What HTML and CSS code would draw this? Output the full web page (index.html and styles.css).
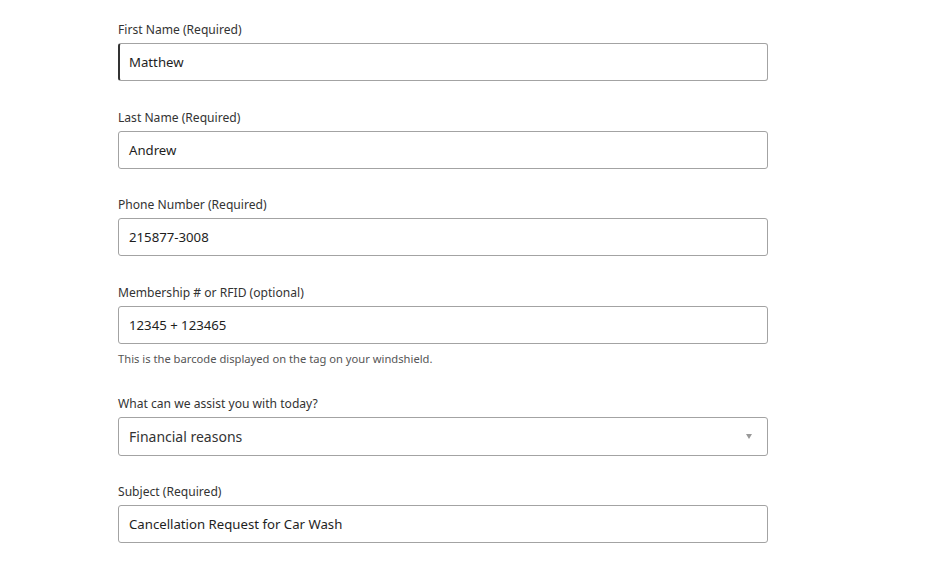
FILE: index.html
```html
<!DOCTYPE html>
<html>
<head>
<meta charset="utf-8">
<link rel="stylesheet" href="styles.css">
</head>
<body>
<form class="form">
  <div class="field">
    <label class="label">First Name (Required)</label>
    <div class="input focused">Matthew</div>
  </div>
  <div class="field">
    <label class="label">Last Name (Required)</label>
    <div class="input">Andrew</div>
  </div>
  <div class="field">
    <label class="label">Phone Number (Required)</label>
    <div class="input">215877-3008</div>
  </div>
  <div class="field">
    <label class="label">Membership # or RFID (optional)</label>
    <div class="input">12345 + 123465</div>
    <div class="help">This is the barcode displayed on the tag on your windshield.</div>
  </div>
  <div class="field field-select">
    <label class="label">What can we assist you with today?</label>
    <div class="input select"><span>Financial reasons</span><span class="arrow"></span></div>
  </div>
  <div class="field">
    <label class="label">Subject (Required)</label>
    <div class="input">Cancellation Request for Car Wash</div>
  </div>
</form>
</body>
</html>
```
FILE: styles.css
```css
html, body { margin: 0; padding: 0; background: #fff; }
body { font-family: "Noto Sans", "Open Sans", sans-serif; color: #2b2b2b; }
.form { display: flex; flex-direction: column; width: 650px; margin-left: 118px; padding-top: 21px; }
.field { display: flex; flex-direction: column; margin-bottom: 27.7px; }
.field-select { margin-bottom: 27.2px; }
.label { font-size: 12.1px; line-height: 18px; color: #333; margin-bottom: 4px; }
.input { box-sizing: border-box; height: 38px; border: 1px solid #a3a3a3; border-radius: 3px; padding: 0 10px; font-size: 13.2px; line-height: 36px; color: #1e1e1e; }
.focused { border-left: 2px solid #333; padding-left: 9px; }
.help { font-size: 11.2px; color: #555; line-height: 16px; margin-top: 7px; margin-bottom: 0.3px; }
.select { height: 39px; line-height: 37px; font-size: 14px; display: flex; justify-content: space-between; align-items: center; color: #333; }
.arrow { width: 0; height: 0; border-left: 3px solid transparent; border-right: 3px solid transparent; border-top: 5px solid #999; margin-right: 5px; }
```
